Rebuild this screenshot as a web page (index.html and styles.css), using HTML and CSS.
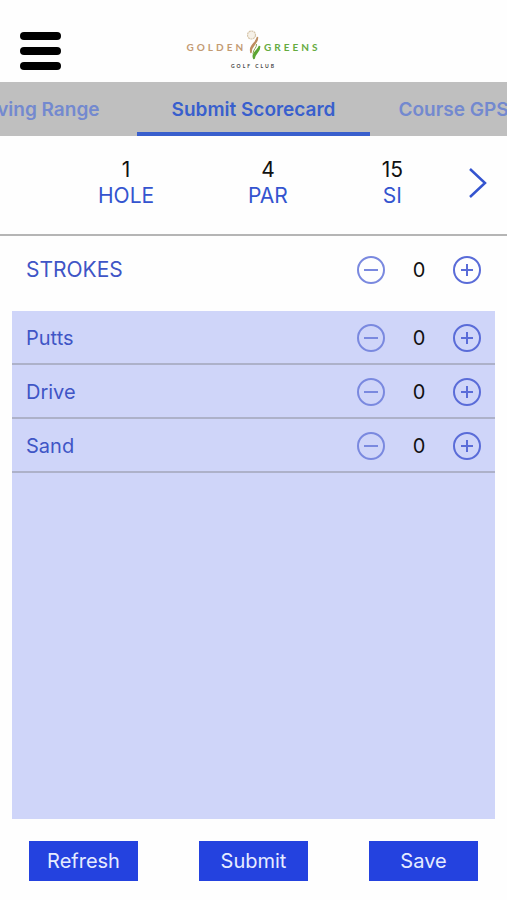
FILE: index.html
```html
<!DOCTYPE html>
<html lang="en">
<head>
    <meta charset="UTF-8">
    <meta name="viewport" content="width=device-width, initial-scale=1.0">
    <title>Submit Scorecard - Golden Greens</title>
    <link rel="stylesheet" href="styles.css">
</head>
<body>
    <header class="header">
        <button class="menu-btn" aria-label="Menu">
            <span></span>
            <span></span>
            <span></span>
        </button>
        <div class="logo">
            <div class="logo-name">
                <span class="gold">GOLDEN</span>
                <svg class="logo-mark" width="16" height="32" viewBox="0 0 16 32">
                    <circle cx="4.500" cy="6" r="4" fill="#f6f1e8" stroke="#d6c5aa" stroke-width="1.200" stroke-dasharray="2 .6"/>
                    <path d="M10.500 8C11.500 15 4 15 4 24C1.500 16 9 15 10.500 8Z" fill="#bd8c60" stroke="#bd8c60" stroke-width="1.300"/>
                    <path d="M12.500 17C13.500 23 7 24 7 30C4 24 11 22 12.500 17Z" fill="#5ba532" stroke="#5ba532" stroke-width="1.500"/>
                    <path d="M9.500 15C10 19 6 20 6 25" fill="none" stroke="#8fa956" stroke-width="1"/>
                </svg>
                <span class="green">GREENS</span>
            </div>
            <div class="logo-sub">GOLF CLUB</div>
        </div>
    </header>

    <nav class="tabs">
        <a href="#range" class="tab tab-prev">Driving Range</a>
        <a href="#scorecard" class="tab active">Submit Scorecard</a>
        <a href="#gps" class="tab tab-next">Course GPS</a>
    </nav>

    <section class="hole-info">
        <dl class="stats">
            <div><dd>1</dd><dt>HOLE</dt></div>
            <div><dd>4</dd><dt>PAR</dt></div>
            <div><dd>15</dd><dt>SI</dt></div>
        </dl>
        <button class="next-btn" aria-label="Next hole">
            <svg width="19" height="34" viewBox="0 0 19 34"><path d="M2 3L17 17L2 31" fill="none" stroke="#3454cf" stroke-width="2.500"/></svg>
        </button>
    </section>

    <main class="scores">
        <div class="row strokes">
            <span>STROKES</span>
            <div class="stepper">
                <button class="minus" aria-label="Fewer strokes"><svg viewBox="0 0 30 30"><circle cx="15" cy="15" r="13"/><path d="M8 15H22"/></svg></button>
                <output>0</output>
                <button aria-label="More strokes"><svg viewBox="0 0 30 30"><circle cx="15" cy="15" r="13"/><path d="M9 15H21M15 9V21"/></svg></button>
            </div>
        </div>
        <div class="panel">
            <div class="row">
                <span>Putts</span>
                <div class="stepper">
                    <button class="minus" aria-label="Fewer putts"><svg viewBox="0 0 30 30"><circle cx="15" cy="15" r="13"/><path d="M8 15H22"/></svg></button>
                    <output>0</output>
                    <button aria-label="More putts"><svg viewBox="0 0 30 30"><circle cx="15" cy="15" r="13"/><path d="M9 15H21M15 9V21"/></svg></button>
                </div>
            </div>
            <div class="row">
                <span>Drive</span>
                <div class="stepper">
                    <button class="minus" aria-label="Decrease drive"><svg viewBox="0 0 30 30"><circle cx="15" cy="15" r="13"/><path d="M8 15H22"/></svg></button>
                    <output>0</output>
                    <button aria-label="Increase drive"><svg viewBox="0 0 30 30"><circle cx="15" cy="15" r="13"/><path d="M9 15H21M15 9V21"/></svg></button>
                </div>
            </div>
            <div class="row">
                <span>Sand</span>
                <div class="stepper">
                    <button class="minus" aria-label="Decrease sand"><svg viewBox="0 0 30 30"><circle cx="15" cy="15" r="13"/><path d="M8 15H22"/></svg></button>
                    <output>0</output>
                    <button aria-label="Increase sand"><svg viewBox="0 0 30 30"><circle cx="15" cy="15" r="13"/><path d="M9 15H21M15 9V21"/></svg></button>
                </div>
            </div>
        </div>
    </main>

    <footer class="actions">
        <button>Refresh</button>
        <button>Submit</button>
        <button>Save</button>
    </footer>
</body>
</html>
```
FILE: styles.css
```css
* { box-sizing: border-box; }
body {
    font-family: Inter, Roboto, sans-serif;
    font-size: 20px;
    line-height: 26px;
    color: #111;
    background: #fefefe;
    margin: 0;
    min-height: 100vh;
    display: flex;
    flex-direction: column;
}
button {
    font: inherit;
    padding: 0;
    border: none;
    background: none;
    cursor: pointer;
}

/* header */
.header {
    height: 82px;
    display: grid;
    grid-template-columns: 1fr auto 1fr;
    padding: 0 20px;
}
.menu-btn {
    width: 41px;
    height: 38px;
    margin-top: 32px;
    display: flex;
    flex-direction: column;
    justify-content: space-between;
}
.menu-btn span {
    width: 100%;
    height: 8px;
    border-radius: 4px;
    background: #000;
}
.logo {
    padding-top: 29px;
    text-align: center;
    font-family: Lato, sans-serif;
}
.logo-name {
    display: flex;
    align-items: center;
    gap: 1px;
    height: 32px;
    padding-top: 4px;
    font-size: 10px;
    font-weight: bold;
    letter-spacing: 3px;
}
.logo-mark { margin-top: -4px; }
.gold { color: #c39a72; }
.green { color: #65ab3f; }
.logo-sub {
    font-size: 5px;
    line-height: 10px;
    font-weight: bold;
    letter-spacing: 2px;
    color: #444;
}

/* tabs */
.tabs {
    display: grid;
    grid-template-columns: minmax(0, 1fr) auto minmax(0, 1fr);
    height: 54px;
    background: #bfbfbf;
    overflow: hidden;
}
.tab {
    display: flex;
    align-items: center;
    padding-top: 5px;
    border-bottom: 4px solid transparent;
    font-size: 19px;
    font-weight: 600;
    white-space: nowrap;
    text-decoration: none;
    color: #7389cf;
}
.tab-prev {
    justify-content: flex-end;
    padding-right: 37px;
}
.tab-next { padding-left: 28px; }
.tab.active {
    padding-left: 35px;
    padding-right: 35px;
    color: #395fcd;
    border-color: #395fcd;
}

/* current hole */
.hole-info {
    display: flex;
    align-items: center;
    height: 100px;
    padding: 0 20px 4px 98px;
    border-bottom: 2px solid #b5b5b5;
}
.stats {
    display: flex;
    flex: 1;
    justify-content: space-between;
    margin: 0 65px 0 0;
    text-align: center;
    font-size: 21px;
}
.stats div {
    display: flex;
    flex-direction: column;
}
.stats dd { margin: 0; }
.stats dt { color: #3454cf; }
.next-btn { height: 34px; }
.next-btn svg { display: block; }

/* score rows */
.scores {
    flex: 1;
    display: flex;
    flex-direction: column;
    padding: 0 12px;
}
.row {
    display: flex;
    justify-content: space-between;
    align-items: center;
    height: 54px;
    padding: 2px 13px 0 14px;
    color: #3f55c6;
}
.strokes {
    height: 75px;
    padding-top: 0;
    padding-bottom: 8px;
    font-size: 21px;
}
.panel {
    flex: 1;
    background: #cfd5f9;
}
.panel .row { border-bottom: 2px solid #adb1c9; }
.stepper {
    display: flex;
    justify-content: space-between;
    align-items: center;
    width: 126px;
    color: #111;
    font-size: 20px;
}
.stepper button {
    width: 30px;
    height: 30px;
}
.stepper svg {
    display: block;
    fill: none;
    stroke: #5a6cd8;
    stroke-width: 2;
}
.stepper .minus svg { stroke: #7a89df; }

/* bottom buttons */
.actions {
    display: flex;
    justify-content: space-between;
    padding: 22px 29px 19px;
}
.actions button {
    width: 109px;
    height: 40px;
    background: #2442df;
    color: #e6ecff;
}
```
